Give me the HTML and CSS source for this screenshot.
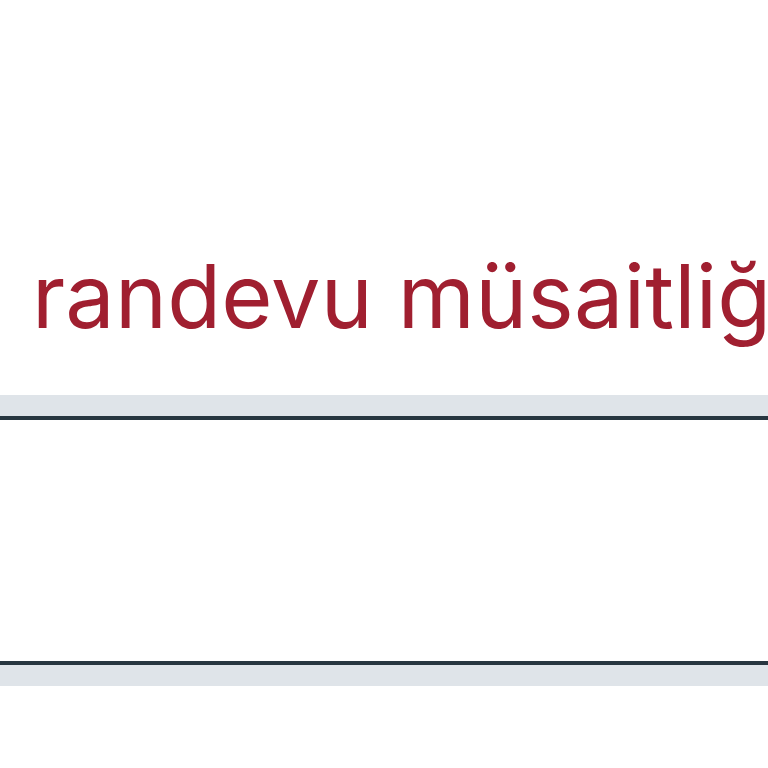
FILE: index.html
```html
<!DOCTYPE html>
<html lang="tr">
<head>
<meta charset="utf-8">
<link rel="stylesheet" href="styles.css">
</head>
<body>
<div class="page">
  <p class="note">randevu müsaitliği</p>
  <div class="field">
    <div class="field-inner"></div>
  </div>
</div>
</body>
</html>
```
FILE: styles.css
```css
html, body {
  margin: 0;
  padding: 0;
  background: #ffffff;
  overflow: hidden;
}
.page {
  width: 768px;
  height: 768px;
  overflow: hidden;
  padding-top: 226px;
  box-sizing: border-box;
}
.note {
  margin: 0 0 0 32px;
  font-family: Inter, "Liberation Sans", sans-serif;
  font-size: 88px;
  line-height: 140px;
  color: #a01f30;
  white-space: nowrap;
  letter-spacing: 0.2px;
}
.field {
  margin-top: 29px;
  background: #dfe4e9;
  padding: 21px 0 21px 0;
}
.field-inner {
  background: #ffffff;
  border-top: 4px solid #273640;
  border-bottom: 4px solid #273640;
  height: 241px;
}
```
